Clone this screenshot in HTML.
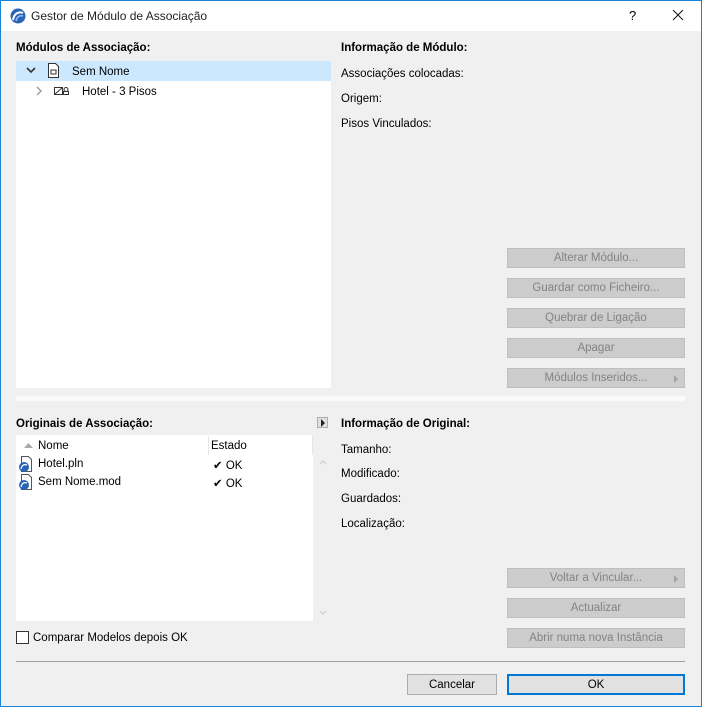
<!DOCTYPE html><html><head><meta charset="utf-8"><style>
*{box-sizing:border-box;margin:0;padding:0}
body{width:702px;height:707px;overflow:hidden;background:#f0f0f0;font-family:"Liberation Sans",sans-serif;font-size:11.5px;color:#000;position:relative}
.a{position:absolute;white-space:nowrap}
.win{position:absolute;left:0;top:0;width:702px;height:707px;border:1px solid #1883d7;}
.b{font-weight:bold}
.btn{position:absolute;left:507px;width:178px;height:20px;background:#cccccc;border:1px solid #bfbfbf;color:#838383;text-align:center;line-height:19px}
.tri{position:absolute;right:6px;top:6px;width:0;height:0;border-left:4px solid #a0a0a0;border-top:4px solid transparent;border-bottom:4px solid transparent}
.pb{position:absolute;height:21px;text-align:center;line-height:20px;background:#e1e1e1;border:1px solid #adadad}
</style></head><body>
<div class="a" style="left:1px;top:1px;width:700px;height:30px;background:#fff"></div>
<svg class="a" style="left:10px;top:8px" width="16" height="16" viewBox="0 0 16 16"><circle cx="8" cy="8" r="7.5" fill="#2a64b8"/><path d="M3 12 C4 6 8 3 13 5" stroke="#fff" stroke-width="2" fill="none"/><path d="M6 13 C7 9 9 7 13 8" stroke="#9cc2f0" stroke-width="1.5" fill="none"/></svg>
<div class="a" style="left:31px;top:9px;font-size:12px;color:#222">Gestor de Módulo de Associação</div>
<div class="a" style="left:629px;top:8px;font-size:13px">?</div>
<svg class="a" style="left:672px;top:9px" width="12" height="12"><path d="M1 1L11 11M11 1L1 11" stroke="#111" stroke-width="1"/></svg>

<div class="a b" style="left:16px;top:42px">Módulos de Associação:</div>
<div class="a" style="left:16px;top:61px;width:315px;height:327px;background:#fff"></div>
<div class="a" style="left:16px;top:61px;width:315px;height:20px;background:#cce8ff"></div>
<svg class="a" style="left:26px;top:67px" width="10" height="8"><path d="M1 1 L5 5 L9 1" stroke="#333" stroke-width="1.6" fill="none"/></svg>
<svg class="a" style="left:47px;top:63px" width="13" height="16"><path d="M1.5 .5h7l3 3v11h-10z" stroke="#333" fill="#fff"/><rect x="4" y="7" width="5" height="4" stroke="#333" fill="none"/></svg>
<div class="a" style="left:72px;top:66px">Sem Nome</div>
<svg class="a" style="left:36px;top:86px" width="6" height="10"><path d="M1 1 L5 5 L1 9" stroke="#999" stroke-width="1.4" fill="none"/></svg>
<svg class="a" style="left:54px;top:86px" width="16" height="10"><rect x=".5" y="1.5" width="8" height="7" stroke="#333" fill="none"/><path d="M1 8 L8 2" stroke="#333"/><circle cx="12" cy="3.5" r="2" stroke="#333" fill="none"/><rect x="9.5" y="5.5" width="5" height="3" stroke="#333" fill="none"/></svg>
<div class="a" style="left:82px;top:86px">Hotel - 3 Pisos</div>

<div class="a b" style="left:341px;top:42px">Informação de Módulo:</div>
<div class="a" style="left:341px;top:68px">Associações colocadas:</div>
<div class="a" style="left:341px;top:93px">Origem:</div>
<div class="a" style="left:341px;top:118px">Pisos Vinculados:</div>

<div class="btn" style="top:248px">Alterar Módulo...</div>
<div class="btn" style="top:278px">Guardar como Ficheiro...</div>
<div class="btn" style="top:308px">Quebrar de Ligação</div>
<div class="btn" style="top:338px">Apagar</div>
<div class="btn" style="top:368px">Módulos Inseridos...<span class="tri"></span></div>

<div class="a" style="left:16px;top:396px;width:669px;height:5px;background:#fafafa"></div>

<div class="a b" style="left:16px;top:418px">Originais de Associação:</div>
<div class="a" style="left:317px;top:417px;width:11px;height:11px;background:#e1e1e1;border:1px solid #adadad"><span class="tri" style="right:2px;top:1px;border-left-color:#222"></span></div>
<div class="a" style="left:16px;top:435px;width:297px;height:186px;background:#fff"></div>
<div class="a" style="left:16px;top:435px;width:297px;height:20px;border-right:1px solid #e5e5e5"></div>
<div class="a" style="left:208px;top:436px;width:1px;height:19px;background:#e5e5e5"></div>
<svg class="a" style="left:24px;top:443px" width="9" height="5"><path d="M0 5 L4.5 0 L9 5z" fill="#aaa"/></svg>
<div class="a" style="left:38px;top:440px">Nome</div>
<div class="a" style="left:211px;top:440px">Estado</div>
<svg class="a" style="left:319px;top:460px" width="8" height="5"><path d="M1 4 L4 1 L7 4" stroke="#ccc" fill="none"/></svg>
<svg class="a" style="left:319px;top:610px" width="8" height="5"><path d="M1 1 L4 4 L7 1" stroke="#ccc" fill="none"/></svg>
<svg class="a" style="left:18px;top:456px" width="15" height="16"><path d="M3.5 .5h7l3 3v12h-10z" stroke="#555" fill="#fff"/><circle cx="6" cy="11" r="5" fill="#2a64b8"/><path d="M3 13 C4 9 6 8 9 9" stroke="#fff" stroke-width="1.3" fill="none"/></svg>
<div class="a" style="left:38px;top:458px">Hotel.pln</div>
<svg class="a" style="left:18px;top:474px" width="15" height="16"><path d="M3.5 .5h7l3 3v12h-10z" stroke="#555" fill="#fff"/><circle cx="6" cy="11" r="5" fill="#2a64b8"/><path d="M3 13 C4 9 6 8 9 9" stroke="#fff" stroke-width="1.3" fill="none"/></svg>
<div class="a" style="left:38px;top:476px">Sem Nome.mod</div>
<div class="a" style="left:213px;top:458px">✔ OK</div>
<div class="a" style="left:213px;top:476px">✔ OK</div>

<div class="a b" style="left:341px;top:418px">Informação de Original:</div>
<div class="a" style="left:341px;top:444px">Tamanho:</div>
<div class="a" style="left:341px;top:468px">Modificado:</div>
<div class="a" style="left:341px;top:493px">Guardados:</div>
<div class="a" style="left:341px;top:518px">Localização:</div>

<div class="btn" style="top:568px">Voltar a Vincular...<span class="tri"></span></div>
<div class="btn" style="top:598px">Actualizar</div>
<div class="btn" style="top:628px">Abrir numa nova Instância</div>

<div class="a" style="left:16px;top:631px;width:13px;height:13px;border:1px solid #333;background:#fff"></div>
<div class="a" style="left:33px;top:632px">Comparar Modelos depois OK</div>

<div class="a" style="left:16px;top:661px;width:669px;height:1px;background:#a0a0a0"></div>
<div class="pb" style="left:407px;top:674px;width:90px">Cancelar</div>
<div class="pb" style="left:507px;top:674px;width:178px;border:2px solid #0078d7;line-height:18px">OK</div>
<div class="win"></div>
</body></html>
